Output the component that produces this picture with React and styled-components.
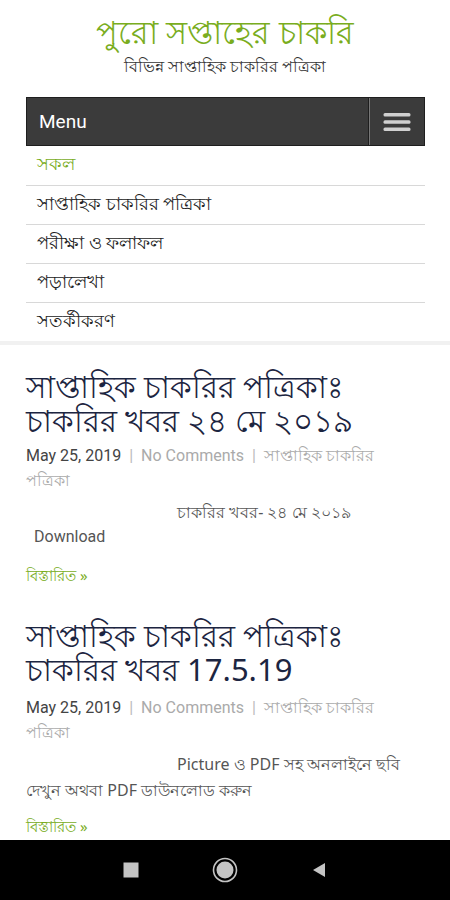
import styled, { createGlobalStyle } from "styled-components";

const Global = createGlobalStyle`
  html, body { margin: 0; padding: 0; background: #fff; }
  body { font-family: "Noto Sans", Roboto, "Liberation Sans", sans-serif; }
  * { box-sizing: border-box; }
`;

const Screen = styled.div`
  width: 450px;
  height: 900px;
  display: flex;
  flex-direction: column;
  overflow: hidden;
  background: #fff;
`;

const Page = styled.div`
  flex: 1;
  overflow: hidden;
`;

const Header = styled.header`
  display: flex;
  flex-direction: column;
  align-items: center;
  padding-top: 12px;
`;

const SiteTitle = styled.h1`
  margin: 0;
  font-size: 32px;
  font-weight: 400;
  line-height: 40px;
  color: #7aad1e;
`;

const Tagline = styled.div`
  font-size: 16px;
  line-height: 20px;
  color: #333;
  margin-top: 4px;
`;

const Nav = styled.nav`
  margin: 21px 25px 0 26px;
`;

const MenuBar = styled.div`
  display: flex;
  height: 49px;
  background: #3b3b3b;
  border: 1px solid #1e1e1e;
`;

const MenuLabel = styled.div`
  flex: 1;
  display: flex;
  align-items: center;
  padding-left: 12px;
  font-family: Roboto, "Liberation Sans", sans-serif;
  font-size: 19px;
  color: #fff;
`;

const Burger = styled.div`
  width: 56px;
  border-left: 1px solid #1e1e1e;
  box-shadow: inset 1px 0 0 #777;
  display: flex;
  align-items: center;
  justify-content: center;
`;

const MenuList = styled.ul`
  list-style: none;
  margin: 0;
  padding: 0;
`;

const MenuItem = styled.li`
  height: 39px;
  display: flex;
  align-items: center;
  padding-left: 11px;
  font-size: 18px;
  color: ${(p) => (p.$active ? "#7aad1e" : "#222")};
  border-top: ${(p) => (p.$first ? "none" : "1px solid #d8d8d8")};
`;

const Divider = styled.div`
  height: 4px;
  background: #f1f1f1;
`;

const Post = styled.article`
  padding: 0 26px;
  margin-top: ${(p) => p.$top}px;
`;

const PostTitle = styled.h2`
  margin: 0;
  max-width: 345px;
  font-size: 31px;
  font-weight: 400;
  line-height: 34px;
  color: #1c2541;
`;

const Meta = styled.div`
  margin-top: ${(p) => p.$top}px;
  max-width: 380px;
  font-family: Roboto, "Liberation Sans", sans-serif;
  font-size: 16px;
  line-height: 25px;
  color: #aaa;
`;

const Date = styled.span`
  color: #444;
`;

const Sep = styled.span`
  margin: 0 8px;
  color: #bbb;
`;

const Body = styled.p`
  margin: 6px 0 0;
  font-size: 16px;
  line-height: 26px;
  color: #555;
  text-indent: ${(p) => p.$indent || 0}px;
`;

const Download = styled.div`
  margin: 0 0 0 8px;
  font-family: Roboto, "Liberation Sans", sans-serif;
  font-size: 16px;
  line-height: 24px;
  color: #555;
`;

const More = styled.a`
  display: block;
  margin-top: ${(p) => p.$top}px;
  font-size: 15px;
  line-height: 24px;
  color: #7aad1e;
  text-decoration: none;
`;

const NavBar = styled.div`
  height: 60px;
  background: #000;
  display: flex;
  align-items: center;
  justify-content: center;
  gap: 73px;
`;

const menu = ["সকল", "সাপ্তাহিক চাকরির পত্রিকা", "পরীক্ষা ও ফলাফল", "পড়ালেখা", "সতর্কীকরণ"];

export default function App() {
  return (
    <Screen>
      <Global />
      <Page>
        <Header>
          <SiteTitle>পুরো সপ্তাহের চাকরি</SiteTitle>
          <Tagline>বিভিন্ন সাপ্তাহিক চাকরির পত্রিকা</Tagline>
        </Header>
        <Nav>
          <MenuBar>
            <MenuLabel>Menu</MenuLabel>
            <Burger>
              <svg width="28" height="22" viewBox="0 0 28 22">
                <rect x="0.5" y="2" width="27" height="3.5" rx="1.5" fill="#d0d0d0" />
                <rect x="0.5" y="9.2" width="27" height="3.5" rx="1.5" fill="#d0d0d0" />
                <rect x="0.5" y="16.4" width="27" height="3.5" rx="1.5" fill="#d0d0d0" />
              </svg>
            </Burger>
          </MenuBar>
          <MenuList>
            {menu.map((m, i) => (
              <MenuItem key={m} $first={i === 0} $active={i === 0}>
                {m}
              </MenuItem>
            ))}
          </MenuList>
        </Nav>
        <Divider />

        <Post $top={24}>
          <PostTitle>সাপ্তাহিক চাকরির পত্রিকাঃ চাকরির খবর ২৪ মে ২০১৯</PostTitle>
          <Meta $top={6}>
            <Date>May 25, 2019</Date>
            <Sep>|</Sep>No Comments<Sep>|</Sep>সাপ্তাহিক চাকরির পত্রিকা
          </Meta>
          <Body $indent={151}>চাকরির খবর- ২৪ মে ২০১৯</Body>
          <Download>Download</Download>
          <More href="#" $top={14}>বিস্তারিত »</More>
        </Post>

        <Post $top={31}>
          <PostTitle>সাপ্তাহিক চাকরির পত্রিকাঃ চাকরির খবর 17.5.19</PostTitle>
          <Meta $top={9}>
            <Date>May 25, 2019</Date>
            <Sep>|</Sep>No Comments<Sep>|</Sep>সাপ্তাহিক চাকরির পত্রিকা
          </Meta>
          <Body $indent={151}>Picture ও PDF সহ অনলাইনে ছবি দেখুন অথবা PDF ডাউনলোড করুন</Body>
          <More href="#" $top={11}>বিস্তারিত »</More>
        </Post>
      </Page>
      <NavBar>
        <svg width="16" height="16" viewBox="0 0 16 16">
          <rect x="0.5" y="0.5" width="15" height="15" fill="#c4c4c4" />
        </svg>
        <svg width="26" height="26" viewBox="0 0 26 26">
          <circle cx="13" cy="13" r="11.5" fill="none" stroke="#c4c4c4" strokeWidth="1.6" />
          <circle cx="13" cy="13" r="8.5" fill="#c4c4c4" />
        </svg>
        <svg width="16" height="16" viewBox="0 0 16 16">
          <polygon points="14,1 14,15 2,8" fill="#c4c4c4" />
        </svg>
      </NavBar>
    </Screen>
  );
}
